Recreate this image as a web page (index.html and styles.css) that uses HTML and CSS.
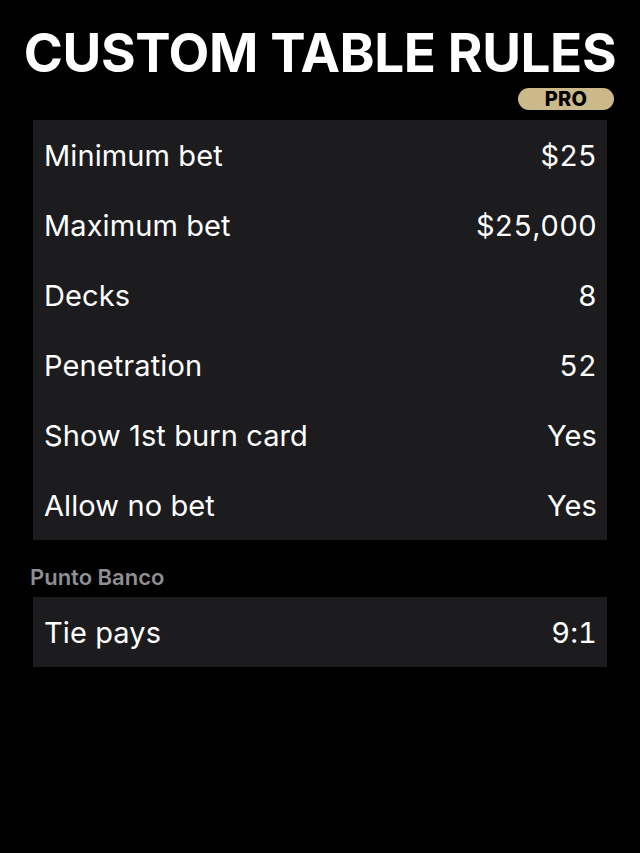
FILE: index.html
```html
<!DOCTYPE html>
<html>
<head>
<meta charset="utf-8">
<link rel="stylesheet" href="styles.css">
</head>
<body>
<div class="page">
  <h1 class="title">CUSTOM TABLE RULES</h1>
  <div class="badge-row"><span class="badge">PRO</span></div>
  <div class="card">
    <div class="row"><span>Minimum bet</span><span class="val">$25</span></div>
    <div class="row"><span>Maximum bet</span><span class="val">$25,000</span></div>
    <div class="row"><span>Decks</span><span class="val">8</span></div>
    <div class="row"><span>Penetration</span><span class="val">52</span></div>
    <div class="row"><span>Show 1st burn card</span><span class="val">Yes</span></div>
    <div class="row"><span>Allow no bet</span><span class="val">Yes</span></div>
  </div>
  <div class="section-label">Punto Banco</div>
  <div class="card">
    <div class="row"><span>Tie pays</span><span class="val">9:1</span></div>
  </div>
</div>
</body>
</html>
```
FILE: styles.css
```css
html, body {
  margin: 0;
  padding: 0;
  background: #000;
}
body {
  width: 640px;
  height: 853px;
  font-family: Inter, "Noto Sans", sans-serif;
  color: #fff;
}
.page {
  padding: 22px 33px 0 33px;
}
.title {
  margin: 0 -10px;
  font-size: 53px;
  font-weight: 700;
  line-height: 62px;
  letter-spacing: -0.4px;
  text-align: center;
  white-space: nowrap;
}
.badge-row {
  display: flex;
  justify-content: flex-end;
  margin: 4px -7px 10px 0;
}
.badge {
  display: inline-flex;
  align-items: center;
  justify-content: center;
  width: 96px;
  height: 22px;
  border-radius: 11px;
  background: #cbb98a;
  color: #000;
  font-size: 20px;
  font-weight: 800;
  letter-spacing: 0.3px;
}
.card {
  background: #1c1c1e;
}
.row {
  display: flex;
  justify-content: space-between;
  align-items: center;
  height: 70px;
  padding: 0 10px 0 11px;
  font-size: 29px;
  font-weight: 400;
  letter-spacing: 0.1px;
}
.val {
  font-variant-numeric: tabular-nums;
}
.section-label {
  margin: 25px 0 8px -3px;
  font-size: 22px;
  font-weight: 600;
  color: #8e8e93;
  line-height: 24px;
}
```
